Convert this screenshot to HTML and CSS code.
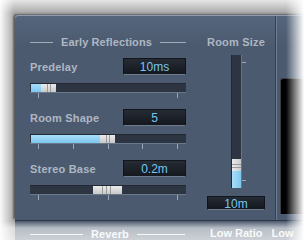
FILE: index.html
```html
<!DOCTYPE html>
<html lang="en">

<head>
    <meta charset="UTF-8">
    <meta name="viewport" content="width=device-width, initial-scale=1.0">
    <title>Early Reflections</title>
    <link rel="stylesheet" href="styles.css">
</head>

<body>
    <div class="stage">
        <div class="window">
            <div class="panel">
                <div class="early">
                    <div class="section-title"><span>Early Reflections</span></div>

                    <div class="param">
                        <div class="param-head">
                            <span class="label">Predelay</span>
                            <span class="readout">10ms</span>
                        </div>
                        <div class="hslider">
                            <div class="fill" style="width: 10px"></div>
                            <div class="thumb"></div>
                        </div>
                        <div class="ticks">
                            <i></i><i></i>
                        </div>
                    </div>

                    <div class="param">
                        <div class="param-head">
                            <span class="label">Room Shape</span>
                            <span class="readout">5</span>
                        </div>
                        <div class="hslider">
                            <div class="fill" style="width: 69px"></div>
                            <div class="thumb"></div>
                        </div>
                        <div class="ticks">
                            <i></i><i></i><i></i><i></i><i></i>
                        </div>
                    </div>

                    <div class="param">
                        <div class="param-head">
                            <span class="label">Stereo Base</span>
                            <span class="readout">0.2m</span>
                        </div>
                        <div class="hslider">
                            <div class="thumb wide" style="margin-left: 63px"></div>
                        </div>
                        <div class="ticks">
                            <i></i><i></i><i></i>
                        </div>
                    </div>
                </div>

                <div class="room">
                    <div class="room-title">Room Size</div>
                    <div class="vslider-wrap">
                        <div class="vslider">
                            <div class="vthumb"></div>
                            <div class="vfill"></div>
                        </div>
                        <div class="vticks">
                            <i></i><i></i>
                        </div>
                    </div>
                    <span class="readout small">10m</span>
                </div>

                <div class="divider"></div>
                <div class="display"></div>
            </div>

            <div class="lower">
                <div class="section-title lower-title"><span>Reverb</span></div>
                <span class="lower-label ratio">Low Ratio</span>
                <span class="lower-label">Low</span>
            </div>
        </div>
        <div class="fade"></div>
    </div>
</body>

</html>
```

FILE: styles.css
```css
:root {
    --panel: #4b5a6f;
    --label: #aeb7c3;
    --readout-text: #78c6f0;
    --fill: #8fd2f5;
    --track: #2d3542;
}

html,
body {
    margin: 0;
    padding: 0;
    background-color: #fff;
    font-family: "Liberation Sans", Arial, sans-serif;
}

.stage {
    width: 305px;
    height: 240px;
    position: relative;
    overflow: hidden;
}

.window {
    background: linear-gradient(#e6e6e6, #a9a9a9 13px);
    padding: 15px 0 0 15px;
    width: 320px;
    height: 260px;
}

.panel {
    display: flex;
    height: 205px;
    background: linear-gradient(#55657b, var(--panel) 30px);
    border-top: 1px solid #8c9bb0;
    border-top-left-radius: 4px;
    box-shadow: -2px -1px 2px rgba(0, 0, 0, 0.45);
    box-sizing: border-box;
}

/* left column */
.early {
    width: 156px;
    margin-left: 15px;
    padding-top: 19px;
}

.section-title {
    display: flex;
    align-items: center;
    gap: 8px;
    height: 14px;
    margin-bottom: 9px;
    color: var(--label);
    font-size: 11px;
    font-weight: bold;
    letter-spacing: 0.1px;
    white-space: nowrap;
}

.section-title::before,
.section-title::after {
    content: '';
    flex: 1;
    height: 1px;
    background-color: #a3adba;
}

.section-title::before {
    flex: 0 0 23px;
}

.param {
    margin-bottom: 11px;
}

.param-head {
    display: flex;
    justify-content: space-between;
    align-items: center;
    height: 17px;
    margin-bottom: 8px;
}

.label {
    color: var(--label);
    font-size: 11px;
    font-weight: bold;
    letter-spacing: 0.2px;
}

.readout {
    width: 63px;
    height: 17px;
    box-sizing: border-box;
    display: flex;
    align-items: center;
    justify-content: center;
    background: linear-gradient(#262c35, #14181e);
    border: 1px solid #12161c;
    border-bottom-color: #6d7b8f;
    color: var(--readout-text);
    font-size: 12px;
    padding-top: 1px;
}

.hslider {
    display: flex;
    height: 9px;
    background-color: var(--track);
    border-top: 1px solid #222831;
    box-sizing: border-box;
    box-shadow: 0 1px 0 #6b798d;
}

.fill {
    background: linear-gradient(#a9defa, #7ec6ef);
    margin-left: 1px;
}

.thumb {
    width: 15px;
    background:
        linear-gradient(90deg, transparent 6px, #9a9a9a 6px, #9a9a9a 7px, transparent 7px, transparent 9px, #9a9a9a 9px, #9a9a9a 10px, transparent 10px),
        linear-gradient(#ebebeb, #c9c9c9);
}

.thumb.wide {
    width: 29px;
    background:
        linear-gradient(90deg, transparent 9px, #9a9a9a 9px, #9a9a9a 10px, transparent 10px, transparent 13px, #9a9a9a 13px, #9a9a9a 14px, transparent 14px, transparent 17px, #9a9a9a 17px, #9a9a9a 18px, transparent 18px),
        linear-gradient(#ebebeb, #c9c9c9);
}

.ticks {
    display: flex;
    justify-content: space-between;
    padding: 1px 8px 0;
    height: 6px;
    box-sizing: border-box;
}

.ticks i {
    width: 1px;
    height: 5px;
    background-color: #9ba7b6;
}

/* room size column */
.room {
    width: 58px;
    margin-left: 21px;
    padding-top: 19px;
    display: flex;
    flex-direction: column;
    align-items: center;
}

.room-title {
    height: 14px;
    display: flex;
    align-items: center;
    color: var(--label);
    font-size: 11px;
    font-weight: bold;
    letter-spacing: 0.2px;
    white-space: nowrap;
}

.vslider-wrap {
    display: flex;
    gap: 1px;
    margin-top: 6px;
    padding-left: 5px;
    height: 133px;
}

.vslider {
    width: 10px;
    display: flex;
    flex-direction: column;
    justify-content: flex-end;
    background-color: var(--track);
    border-left: 1px solid #222831;
    box-sizing: border-box;
    box-shadow: 1px 0 0 #66758a;
}

.vthumb {
    height: 12px;
    background:
        linear-gradient(transparent 5px, #9a9a9a 5px, #9a9a9a 6px, transparent 6px, transparent 8px, #9a9a9a 8px, #9a9a9a 9px, transparent 9px),
        linear-gradient(90deg, #ebebeb, #c9c9c9);
}

.vfill {
    height: 17px;
    background: linear-gradient(90deg, #a9defa, #7ec6ef);
}

.vticks {
    display: flex;
    flex-direction: column;
    justify-content: space-between;
    padding: 7px 0 7px;
}

.vticks i {
    width: 4px;
    height: 1px;
    background-color: #9ba7b6;
}

.readout.small {
    width: 58px;
    height: 14px;
    margin-top: 8px;
}

.divider {
    width: 1px;
    margin-left: 10px;
    background-color: #36414f;
    box-shadow: 1px 0 0 #6f7e92;
}

.display {
    flex: 1;
    margin: 62px 0 6px 4px;
    background-color: #000;
    border-top: 1px solid #3a3f46;
    border-left: 1px solid #3a3f46;
    border-top-left-radius: 3px;
}

/* lower section, mostly faded out */
.lower {
    display: flex;
    align-items: flex-start;
    height: 30px;
    padding-top: 6px;
    box-sizing: border-box;
    background-color: var(--panel);
    border-top: 1px solid #2b3543;
    color: #eef1f4;
    font-size: 11px;
    font-weight: bold;
    white-space: nowrap;
}

.lower-title {
    width: 155px;
    margin: 0 0 0 15px;
    color: #eef1f4;
}

.lower-title::before,
.lower-title::after {
    background-color: #e4e8ec;
}

.lower-title::before {
    flex: 0 0 53px;
}

.lower-label.ratio {
    margin-left: 25px;
    margin-right: 9px;
}

.fade {
    position: absolute;
    inset: 0;
    pointer-events: none;
    background:
        linear-gradient(90deg, rgba(255, 255, 255, 0.95), rgba(255, 255, 255, 0) 14px),
        linear-gradient(90deg, rgba(255, 255, 255, 0) 286px, #fff 304px),
        linear-gradient(rgba(255, 255, 255, 0) 221px, rgba(255, 255, 255, 0.6) 228px, rgba(255, 255, 255, 0.72) 240px);
}
```
